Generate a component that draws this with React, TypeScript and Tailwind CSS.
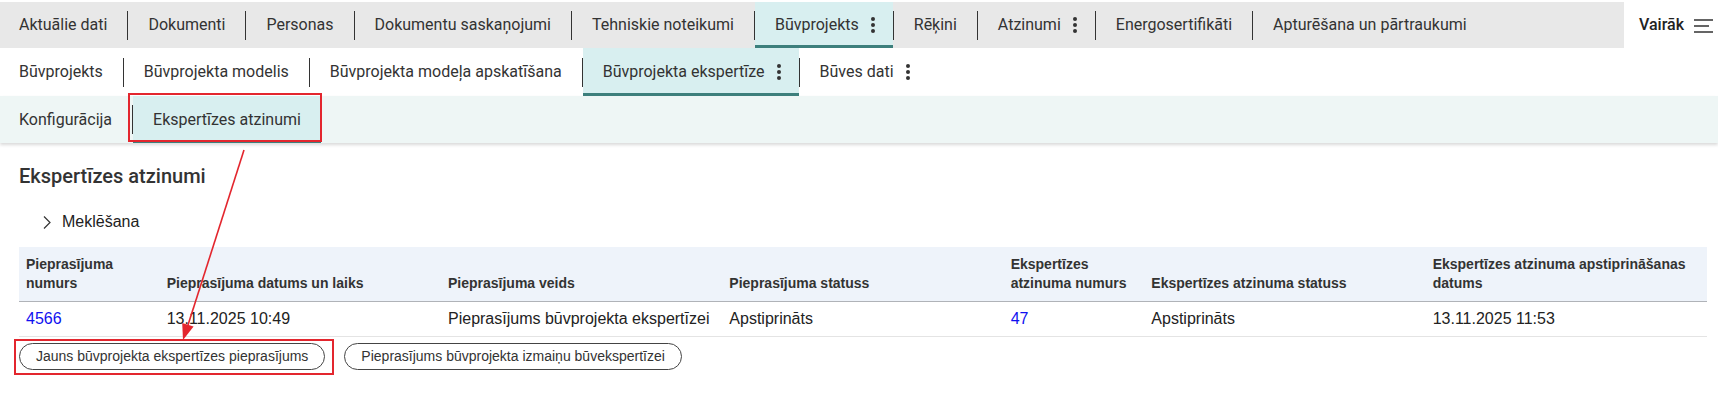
import React from 'react'

const tabFont = { fontFamily: 'Roboto, "Noto Sans", sans-serif' }
const tableFont = { fontFamily: '"Liberation Sans", Arial, sans-serif' }

function Dots() {
  return (
    <span className="flex flex-col gap-[2px]">
      <span className="size-1 rounded-full bg-[#333]" />
      <span className="size-1 rounded-full bg-[#333]" />
      <span className="size-1 rounded-full bg-[#333]" />
    </span>
  )
}

function Sep() {
  return <span className="h-[29px] w-px shrink-0 bg-[#333]" />
}

interface Tab {
  label: string
  menu?: boolean
  active?: boolean
}

function TabRow({ tabs, className }: { tabs: Tab[]; className: string }) {
  return (
    <div className={`flex items-center ${className}`}>
      {tabs.map((t, i) => (
        <React.Fragment key={t.label}>
          {i > 0 && <Sep />}
          <div
            className={`flex h-full items-center gap-3 whitespace-nowrap pl-5 ${
              t.menu ? 'pr-[18px]' : 'pr-5'
            } ${i === 0 ? 'pl-[19px]' : ''} ${
              t.active ? 'border-b-[3px] border-[#3d7f7c] bg-[#d8eff0] pt-[3px]' : ''
            }`}
          >
            <span>{t.label}</span>
            {t.menu && <Dots />}
          </div>
        </React.Fragment>
      ))}
    </div>
  )
}

const mainTabs: Tab[] = [
  { label: 'Aktuālie dati' },
  { label: 'Dokumenti' },
  { label: 'Personas' },
  { label: 'Dokumentu saskaņojumi' },
  { label: 'Tehniskie noteikumi' },
  { label: 'Būvprojekts', menu: true, active: true },
  { label: 'Rēķini' },
  { label: 'Atzinumi', menu: true },
  { label: 'Energosertifikāti' },
  { label: 'Apturēšana un pārtraukumi' },
]

const subTabs: Tab[] = [
  { label: 'Būvprojekts' },
  { label: 'Būvprojekta modelis' },
  { label: 'Būvprojekta modeļa apskatīšana' },
  { label: 'Būvprojekta ekspertīze', menu: true, active: true },
  { label: 'Būves dati', menu: true },
]

const thirdTabs: Tab[] = [
  { label: 'Konfigurācija' },
  { label: 'Ekspertīzes atzinumi', active: true },
]

const headers = [
  'Pieprasījuma numurs',
  'Pieprasījuma datums un laiks',
  'Pieprasījuma veids',
  'Pieprasījuma statuss',
  'Ekspertīzes atzinuma numurs',
  'Ekspertīzes atzinuma statuss',
  'Ekspertīzes atzinuma apstiprināšanas datums',
]

const row: { text: string; link?: boolean }[] = [
  { text: '4566', link: true },
  { text: '13.11.2025 10:49' },
  { text: 'Pieprasījums būvprojekta ekspertīzei' },
  { text: 'Apstiprināts' },
  { text: '47', link: true },
  { text: 'Apstiprināts' },
  { text: '13.11.2025 11:53' },
]

export default function App() {
  return (
    <div className="relative h-[394px] w-[1718px] overflow-hidden bg-white pt-[2px] text-[#333]">
      {/* tab bars */}
      <div style={tabFont} className="text-[16px]">
        <div className="flex h-[46px] bg-[#e8e8e8]">
          <TabRow tabs={mainTabs} className="h-full flex-1" />
          <div className="flex w-[94px] items-center gap-[10px] bg-white pl-[15px] font-medium text-[#222]">
            <span>Vairāk</span>
            <svg width="19" height="14" viewBox="0 0 19 14" className="mt-[1px]">
              <path d="M0 1h19M0 7h15M0 13h19" stroke="#333" strokeWidth="1.5" fill="none" />
            </svg>
          </div>
        </div>
        <TabRow tabs={subTabs} className="h-[48px] bg-white" />
        <TabRow
          tabs={thirdTabs}
          className="h-[47px] bg-[#eef6f5] shadow-[0_2px_3px_rgba(0,0,0,0.15)]"
        />
      </div>

      {/* content */}
      <div className="pl-[19px] pr-[11px]">
        <h2 style={tabFont} className="mt-[19px] text-[20px] leading-[28px] font-medium text-[#333]">
          Ekspertīzes atzinumi
        </h2>

        <div style={tableFont} className="mt-[20px] flex items-center gap-[11px] pl-[24px] text-[16px] leading-[24px] text-[#222]">
          <svg width="8" height="13" viewBox="0 0 8 13">
            <path d="M1 0.5l6 6-6 6" stroke="#333" strokeWidth="1.2" fill="none" />
          </svg>
          <span>Meklēšana</span>
        </div>

        <div style={tableFont} className="mt-[13px]">
          <div className="grid grid-cols-[1fr_2fr_2fr_2fr_1fr_2fr_2fr] items-end border-b border-[#b0b3b8] bg-[#eef3fa]">
            {headers.map((h) => (
              <div key={h} className="px-[7px] py-2 text-[14px] leading-[19px] font-bold text-[#333]">
                {h}
              </div>
            ))}
          </div>
          <div className="grid grid-cols-[1fr_2fr_2fr_2fr_1fr_2fr_2fr] border-b border-[#e4e4e4]">
            {row.map((c, i) => (
              <div
                key={i}
                className={`px-[7px] py-[6px] text-[16px] leading-[22px] ${
                  c.link ? 'text-[#1010f0]' : 'text-[#222]'
                }`}
              >
                {c.text}
              </div>
            ))}
          </div>
        </div>

        <div style={tableFont} className="mt-[6px] flex gap-[19px] text-[14px] text-[#333]">
          <button className="h-[27px] rounded-full border border-[#444] px-4 leading-[25px] whitespace-nowrap">
            Jauns būvprojekta ekspertīzes pieprasījums
          </button>
          <button className="h-[27px] rounded-full border border-[#444] px-4 leading-[25px] whitespace-nowrap">
            Pieprasījums būvprojekta izmaiņu būvekspertīzei
          </button>
        </div>
      </div>

      {/* annotations */}
      <div className="pointer-events-none absolute left-[128px] top-[93px] h-[49px] w-[194px] border-2 border-[#e3262e]" />
      <div className="pointer-events-none absolute left-[14px] top-[339px] h-[36px] w-[320px] border-2 border-[#e3262e]" />
      <svg className="pointer-events-none absolute left-0 top-0" width="1718" height="394">
        <line x1="244" y1="150" x2="188" y2="325" stroke="#e3262e" strokeWidth="1.6" />
        <polygon points="183,340 193.6,326.6 182.2,323" fill="#e3262e" />
      </svg>
    </div>
  )
}
